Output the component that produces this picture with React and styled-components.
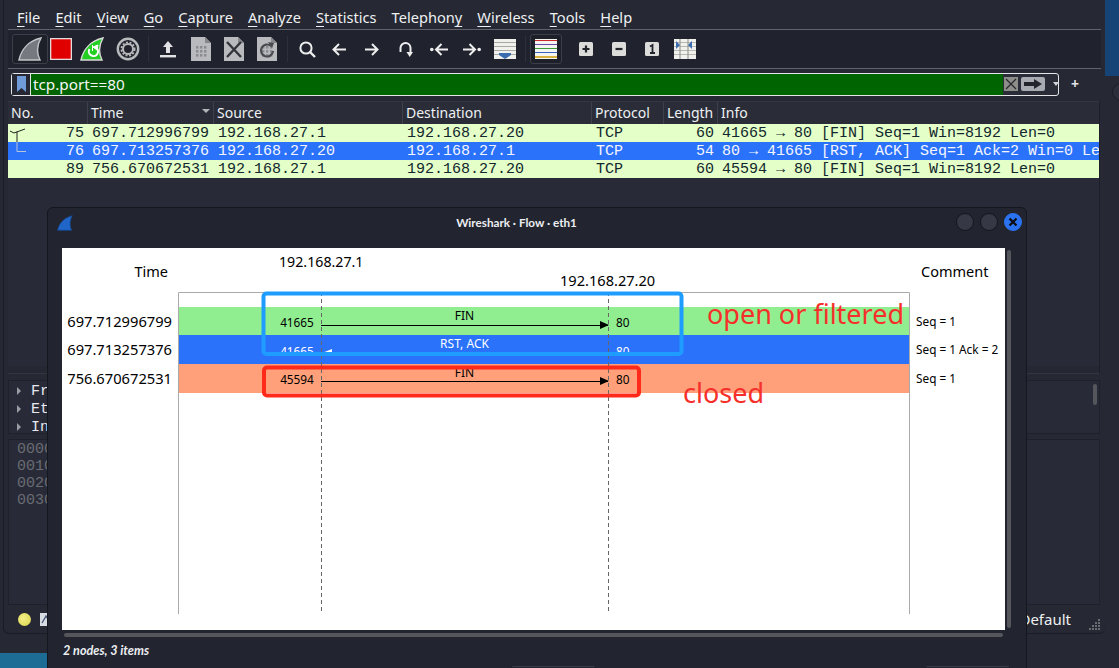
import React from 'react';
import styled, { createGlobalStyle } from 'styled-components';

const GlobalStyle = createGlobalStyle`
  html, body { margin: 0; padding: 0; background: #262833; }
  body { font-family: "Noto Sans", sans-serif; }
`;

const Desktop = styled.div`
  position: relative;
  display: flex;
  width: 1119px;
  height: 668px;
  overflow: hidden;
  background: #262833;
`;
const LeftColumn = styled.div`
  width: 1105px;
  flex: none;
`;
const RightColumn = styled.div`
  display: flex;
  flex-direction: column;
  flex: 1;
`;
const Wallpaper = styled.div`
  height: 76px;
  background: #174477;
`;
const DesktopDot = styled.div`
  width: 18px;
  height: 18px;
  margin: 7px 0 0 7px;
  box-sizing: border-box;
  border-radius: 50%;
  border: 1px solid #1b1d26;
  background: #2c2f3b;
`;
const BottomStripe = styled.div`
  width: 47px;
  height: 15px;
  margin-top: 19px;
  background: #1d6c96;
`;
const MainWindow = styled.div`
  display: flex;
  flex-direction: column;
  box-sizing: border-box;
  height: 634px;
  margin-left: 3px;
  padding: 0 4px 0 4px;
  background: #262933;
  border-left: 1px solid #1b1d26;
  border-bottom: 1px solid #1b1d26;
  border-radius: 0 0 6px 6px;
`;

const MenuBar = styled.div`
  display: flex;
  gap: 15.1px;
  height: 30px;
  flex: none;
  box-sizing: border-box;
  padding: 7px 0 0 9px;
  color: #eef0f2;
  font-size: 14.6px;
  line-height: 20px;
  border-bottom: 1px solid #62636a;
`;
const Mnemonic = styled.span`
  text-decoration: underline;
  text-underline-offset: 3px;
  text-decoration-thickness: 1px;
`;

const Toolbar = styled.div`
  display: flex;
  align-items: center;
  flex: none;
  height: 39px;
  box-sizing: border-box;
  padding-left: 4px;
  background: #20232d;
  border-bottom: 1px solid #62636a;
`;
const ToolButton = styled.div`
  display: flex;
  align-items: center;
  justify-content: center;
  box-sizing: border-box;
  flex: none;
  width: ${(p) => p.$w || 33}px;
  height: 30px;
  margin-right: ${(p) => p.$after || 0}px;
  border: 1px solid ${(p) => (p.$on ? '#3c3f49' : 'transparent')};
  border-radius: 3px;
  background: ${(p) => (p.$on ? '#1d2029' : 'transparent')};
`;
const ToolSep = styled.div`
  flex: none;
  width: 1px;
  height: 26px;
  margin: 0 ${(p) => p.$m || 4}px;
  background: #2d303a;
`;

const FilterRow = styled.div`
  display: flex;
  align-items: center;
  flex: none;
  height: 32px;
  padding-left: 3px;
  box-sizing: border-box;
  padding-bottom: 6px;
  padding-top: 4px;
`;
const FilterBox = styled.div`
  display: flex;
  align-items: stretch;
  width: 1048px;
  height: 23px;
  box-sizing: border-box;
  border: 1px solid #e6e6e8;
  border-radius: 3px;
  background: #2a2d38;
`;
const BookmarkCell = styled.div`
  display: flex;
  align-items: center;
  justify-content: center;
  width: 18px;
  flex: none;
  background: #262933;
  border-right: 1px solid #e6e6e8;
`;
const FilterInput = styled.div`
  width: 972px;
  flex: none;
  box-sizing: border-box;
  padding-left: 2px;
  background: #006400;
  color: #f4f6f4;
  font-size: 15.3px;
  line-height: 21px;
`;
const FilterActions = styled.div`
  display: flex;
  align-items: center;
  flex: 1;
  padding-left: 1px;
`;
const ClearButton = styled.div`
  display: flex;
  align-items: center;
  justify-content: center;
  width: 14px;
  height: 14px;
  background: #8d8e8a;
  margin-right: 3px;
`;
const ApplyButton = styled.div`
  display: flex;
  align-items: center;
  justify-content: center;
  width: 24px;
  height: 14px;
  border-radius: 2px;
  background: #a9abb3;
`;
const Caret = styled.div`
  width: 0;
  height: 0;
  margin-left: 8px;
  border-left: 3.5px solid transparent;
  border-right: 3.5px solid transparent;
  border-top: 4px solid #d4d5d8;
`;
const PlusSign = styled.div`
  margin-left: 12px;
  color: #e0e1e4;
  font-size: 14px;
  font-weight: 700;
  line-height: 20px;
`;

const columns = '80px 126px 189px 189px 72px 54px 1fr';

const ListPane = styled.div`
  display: flex;
  flex-direction: column;
  flex: none;
  width: 1092px;
  height: 273px;
  box-sizing: border-box;
  border-bottom: 1px solid #33363f;
  background: #282b37;
  border-right: 1px solid #1d1f28;
`;
const HeaderRow = styled.div`
  display: grid;
  grid-template-columns: ${columns};
  height: 23px;
  flex: none;
  box-sizing: border-box;
  background: #2a2d38;
  border-top: 1px solid #33363f;
`;
const HeaderCell = styled.div`
  position: relative;
  box-sizing: border-box;
  padding-left: 3px;
  color: #eef0f2;
  font-size: 14px;
  line-height: 22px;
  border-right: 1px solid #3f424d;
  &:last-child { border-right: 0; }
`;
const SortCaret = styled.span`
  position: absolute;
  right: 3px;
  top: 7px;
  width: 0;
  height: 0;
  border-left: 4px solid transparent;
  border-right: 4px solid transparent;
  border-top: 4px solid #b4b5b9;
`;
const PacketRow = styled.div`
  display: grid;
  grid-template-columns: ${columns};
  height: 18px;
  flex: none;
  overflow: hidden;
  background: ${(p) => (p.$selected ? '#2b72fb' : '#e4ffc7')};
  color: ${(p) => (p.$selected ? '#f4f6ff' : '#12272e')};
  font-family: "Liberation Mono", monospace;
  font-size: 15px;
  line-height: 20px;
`;
const Cell = styled.div`
  position: relative;
  box-sizing: border-box;
  padding: 0 4px;
  white-space: nowrap;
  overflow: hidden;
  text-align: ${(p) => (p.$right ? 'right' : 'left')};
`;
const Cue = styled.svg`
  position: absolute;
  left: 1px;
  top: 0;
`;
const ListFoot = styled.div`
  height: 7px;
  margin-top: auto;
  background: #252833;
`;

const DetailPane = styled.div`
  flex: none;
  width: 1092px;
  height: 54px;
  margin-top: 6px;
  box-sizing: border-box;
  padding: 1px 0 0 8px;
  background: #282b37;
  border: 1px solid #1f212a;
  position: relative;
`;
const TreeRow = styled.div`
  display: flex;
  align-items: center;
  height: 18px;
  color: #e6e8f0;
  font-family: "Liberation Mono", monospace;
  font-size: 15px;
`;
const TreeArrow = styled.span`
  width: 0;
  height: 0;
  margin-right: 10px;
  border-top: 4px solid transparent;
  border-bottom: 4px solid transparent;
  border-left: 4px solid #9a9ca3;
`;
const PaneScroll = styled.div`
  position: absolute;
  right: 2px;
  top: 3px;
  width: 4px;
  height: 21px;
  border-radius: 2px;
  background: #55565c;
`;
const BytesPane = styled.div`
  flex: none;
  width: 1092px;
  height: 166px;
  margin-top: 5px;
  box-sizing: border-box;
  padding: 1px 0 0 8px;
  background: #282b37;
  border: 1px solid #1f212a;
`;
const HexRow = styled.div`
  color: #6a6c74;
  font-family: "Liberation Mono", monospace;
  font-size: 15px;
  line-height: 17px;
`;
const StatusBar = styled.div`
  display: flex;
  align-items: center;
  flex: 1;
  width: 1092px;
  box-sizing: border-box;
  padding: 0 0 0 10px;
`;
const ExpertLed = styled.div`
  width: 13px;
  height: 13px;
  border-radius: 50%;
  background: radial-gradient(circle at 40% 40%, #f4f088, #d8d24a);
`;
const NoteIcon = styled.svg`
  margin-left: 9px;
`;
const ProfileLabel = styled.div`
  margin-left: auto;
  color: #eef0f2;
  font-size: 15px;
`;
const SizeGrip = styled.svg`
  margin: 10px 0 0 18px;
`;

/* flow dialog, a window floating over the main one */
const FlowWindow = styled.div`
  position: absolute;
  left: 47px;
  top: 207px;
  width: 980px;
  height: 470px;
  display: flex;
  flex-direction: column;
  box-sizing: border-box;
  background: #22252f;
  border: 1px solid #15171e;
  border-radius: 6px 6px 0 0;
`;
const TitleBar = styled.div`
  position: relative;
  display: flex;
  align-items: center;
  justify-content: center;
  height: 40px;
  flex: none;
  box-sizing: border-box;
  padding: 0 41px 13px 0;
  color: #eceef2;
  font-family: Lato, sans-serif;
  font-size: 11.7px;
  font-weight: 700;
`;
const TitleLogo = styled.svg`
  position: absolute;
  left: 9px;
  top: 7px;
`;
const WindowControls = styled.div`
  position: absolute;
  right: 4px;
  top: 5px;
  display: flex;
  gap: 6px;
`;
const WindowDot = styled.div`
  display: flex;
  align-items: center;
  justify-content: center;
  box-sizing: border-box;
  width: 18px;
  height: 18px;
  border-radius: 50%;
  background: ${(p) => (p.$close ? '#2b72f0' : '#363945')};
  border: 1px solid ${(p) => (p.$close ? '#2b72f0' : '#14161c')};
`;
const GraphArea = styled.div`
  display: flex;
  flex: none;
  height: 382px;
  padding-left: 14px;
`;
const GraphCanvas = styled.svg`
  display: block;
  flex: none;
  background: #fff;
  font-family: "Noto Sans", sans-serif;
`;
const VerticalScroll = styled.div`
  width: 4px;
  height: 378px;
  margin: 2px 0 0 2px;
  border-radius: 2px;
  background: #55565c;
`;
const HorizontalScroll = styled.div`
  width: 939px;
  height: 4px;
  margin: 3px 0 0 16px;
  border-radius: 2px;
  background: #55565c;
  flex: none;
`;
const DialogFooter = styled.div`
  display: flex;
  align-items: flex-start;
  padding: 7px 0 0 15px;
  color: #eceef2;
  font-family: Lato, sans-serif;
  font-size: 12.6px;
  font-style: italic;
  font-weight: 700;
  line-height: 14px;
`;
const FooterButton = styled.div`
  width: 85px;
  height: 20px;
  margin: 22px 0 0 ${(p) => p.$gap}px;
  box-sizing: border-box;
  border: 1px solid #15171e;
  border-top-color: #3b3e49;
  border-radius: 3px;
`;

const FinShape = 'M1 23 C3 13 10 4 23 1 C19 8 18.5 16 22 23 Z';

const Fin = () => (
  <svg width="24" height="24" viewBox="0 0 24 24">
    <path d={FinShape} fill="#777981" stroke="#c4c5c8" strokeWidth="1.4" />
  </svg>
);
const StopIcon = () => (
  <svg width="22" height="22" viewBox="0 0 22 22">
    <rect x="0.5" y="0.5" width="21" height="21" fill="#e00000" stroke="#e4dcdc" strokeWidth="1.6" />
  </svg>
);
const RestartIcon = () => (
  <svg width="24" height="24" viewBox="0 0 24 24">
    <path d={FinShape} fill="#22cf22" stroke="#d8dad8" strokeWidth="1.4" />
    <path d="M9.5 12 a4.6 4.6 0 1 0 7 -1" fill="none" stroke="#fff" strokeWidth="2" />
    <path d="M13 10 l5 -2 l-1 5 Z M12.5 8 v6" fill="#fff" stroke="#fff" strokeWidth="1" />
  </svg>
);
const GearIcon = () => (
  <svg width="24" height="24" viewBox="0 0 24 24">
    <circle cx="12" cy="12" r="10.2" fill="none" stroke="#b9babd" strokeWidth="2.4" />
    <circle cx="12" cy="12" r="5" fill="none" stroke="#b9babd" strokeWidth="2" />
    <circle cx="12" cy="12" r="6.6" fill="none" stroke="#b9babd" strokeWidth="1.8" strokeDasharray="2 1.6" />
  </svg>
);
const UploadIcon = () => (
  <svg width="16" height="17" viewBox="0 0 16 17">
    <path d="M8 0 L13 6 H10 V12 H6 V6 H3 Z" fill="#e3e3e5" />
    <rect x="0" y="14" width="16" height="2.4" fill="#e3e3e5" />
  </svg>
);
const DocBase = ({ children }) => (
  <svg width="20" height="24" viewBox="0 0 20 24">
    <path d="M0 0 H14 L20 6 V24 H0 Z" fill="#b8babd" />
    <path d="M14 0 L20 6 H14 Z" fill="#85878b" />
    {children}
  </svg>
);
const DocDigits = () => (
  <g fill="#8a8c90">
    {[9, 13, 17].map((y) => [5, 9, 13].map((x) => <rect key={`${x}${y}`} x={x} y={y} width="2.4" height="2.6" />))}
  </g>
);
const DocIcon = () => <DocBase><DocDigits /></DocBase>;
const DocCloseIcon = () => (
  <DocBase>
    <path d="M3 5 L17 20 M17 5 L3 20" stroke="#33353d" strokeWidth="2.4" />
  </DocBase>
);
const DocReloadIcon = () => (
  <DocBase>
    <DocDigits />
    <path d="M14 9 a6 6 0 1 0 2 5" fill="none" stroke="#484a50" strokeWidth="2.2" />
    <path d="M11 5 l6 1 l-2 5 Z" fill="#484a50" />
  </DocBase>
);
const SearchIcon = () => (
  <svg width="17" height="17" viewBox="0 0 17 17" fill="none" stroke="#eeeeef" strokeWidth="2">
    <circle cx="7" cy="7" r="5.6" />
    <path d="M11 11 L16 16" strokeWidth="2.4" />
  </svg>
);
const LeftIcon = () => (
  <svg width="14" height="13" viewBox="0 0 14 13" fill="none" stroke="#eeeeef" strokeWidth="2">
    <path d="M14 6.5 H2 M7 1 L1.5 6.5 L7 12" />
  </svg>
);
const RightIcon = () => (
  <svg width="14" height="13" viewBox="0 0 14 13" fill="none" stroke="#eeeeef" strokeWidth="2">
    <path d="M0 6.5 H12 M7 1 L12.5 6.5 L7 12" />
  </svg>
);
const JumpIcon = () => (
  <svg width="14" height="15" viewBox="0 0 14 15">
    <path d="M1.5 10 V6 a5 5 0 0 1 10 0 V11" fill="none" stroke="#eeeeef" strokeWidth="2" />
    <path d="M7.5 10 H14 L10.7 15 Z" fill="#eeeeef" />
  </svg>
);
const PrevIcon = () => (
  <svg width="18" height="13" viewBox="0 0 18 13" fill="none" stroke="#eeeeef" strokeWidth="2">
    <circle cx="1.8" cy="6.5" r="1.8" fill="#eeeeef" stroke="none" />
    <path d="M18 6.5 H7 M11.5 1 L6 6.5 L11.5 12" />
  </svg>
);
const NextIcon = () => (
  <svg width="18" height="13" viewBox="0 0 18 13" fill="none" stroke="#eeeeef" strokeWidth="2">
    <circle cx="16.2" cy="6.5" r="1.8" fill="#eeeeef" stroke="none" />
    <path d="M0 6.5 H11 M6.5 1 L12 6.5 L6.5 12" />
  </svg>
);
const AutoScrollIcon = () => (
  <svg width="22" height="20" viewBox="0 0 22 20">
    <rect width="22" height="20" fill="#f0f0ec" />
    <path d="M0 3.5 H22 M0 7.5 H22 M0 11.5 H22 M0 15.5 H22" stroke="#a8a9a4" strokeWidth="1" />
    <path d="M5 14 H17 V16 L11 20 L5 16 Z" fill="#3b6cb0" />
  </svg>
);
const ColorizeIcon = () => (
  <svg width="22" height="20" viewBox="0 0 22 20">
    <rect width="22" height="20" fill="#f4f4f0" />
    <path d="M0 1.5 H22" stroke="#cc2a2a" strokeWidth="1" />
    <path d="M0 5.5 H22" stroke="#6a4aa8" strokeWidth="1" />
    <path d="M0 9.5 H22" stroke="#3a9a3a" strokeWidth="1" />
    <path d="M0 13.5 H22" stroke="#3a62c0" strokeWidth="1" />
    <path d="M0 18 H22" stroke="#d0a010" strokeWidth="1.6" />
  </svg>
);
const ZoomBox = ({ children }) => (
  <svg width="14" height="14" viewBox="0 0 14 14">
    <rect width="14" height="14" rx="1.5" fill="#dcdcda" />
    {children}
  </svg>
);
const ResizeIcon = () => (
  <svg width="22" height="20" viewBox="0 0 22 20">
    <rect width="22" height="20" fill="#f0f0ec" />
    <path d="M0 3.5 H22 M0 7.5 H22 M0 11.5 H22 M0 15.5 H22" stroke="#b8b9b4" strokeWidth="1" />
    <path d="M6 0 V20 M14 0 V20" stroke="#8a8b88" strokeWidth="1" />
    <path d="M2 2 L6 6 L2 10 Z M18 2 L14 6 L18 10 Z" fill="#3b6cb0" />
  </svg>
);

const packets = [
  { no: 75, time: '697.712996799', src: '192.168.27.1', dst: '192.168.27.20', len: 60, info: '41665 → 80 [FIN] Seq=1 Win=8192 Len=0', cue: 'first' },
  { no: 76, time: '697.713257376', src: '192.168.27.20', dst: '192.168.27.1', len: 54, info: '80 → 41665 [RST, ACK] Seq=1 Ack=2 Win=0 Len=0', cue: 'last', selected: true },
  { no: 89, time: '756.670672531', src: '192.168.27.1', dst: '192.168.27.20', len: 60, info: '45594 → 80 [FIN] Seq=1 Win=8192 Len=0' },
];

const menus = [
  ['', 'F', 'ile'], ['', 'E', 'dit'], ['', 'V', 'iew'], ['', 'G', 'o'], ['', 'C', 'apture'], ['', 'A', 'nalyze'],
  ['', 'S', 'tatistics'], ['Telephon', 'y', ''], ['', 'W', 'ireless'], ['', 'T', 'ools'], ['', 'H', 'elp'],
];

const flows = [
  { y: 307, h: 28, fill: '#90ee90', time: '697.712996799', from: '41665', to: '80', label: 'FIN', labelY: 320, comment: 'Seq = 1', line: 325, ink: '#000', base: 327 },
  { y: 335, h: 29, fill: '#2b72fb', time: '697.713257376', from: '41665', to: '80', label: 'RST, ACK', labelY: 348, comment: 'Seq = 1 Ack = 2', line: 353, ink: '#fff', base: 356, back: true },
  { y: 364, h: 29, fill: '#ffa07a', time: '756.670672531', from: '45594', to: '80', label: 'FIN', labelY: 377, comment: 'Seq = 1', line: 381, ink: '#000', base: 384 },
];

const FlowGraph = () => (
  <GraphCanvas width="943" height="382" viewBox="62 248 943 382">
    <text x="168" y="277" fontSize="14.5" textAnchor="end">Time</text>
    <text x="279" y="267" fontSize="14.2">192.168.27.1</text>
    <text x="560" y="286" fontSize="14.6">192.168.27.20</text>
    <text x="921" y="277" fontSize="14.5">Comment</text>
    <path d="M178.5 614 V292.5 H909.5 V614" fill="none" stroke="#aaa" />
    {flows.map((f) => <rect key={f.y} x="179" y={f.y} width="730" height={f.h} fill={f.fill} />)}
    <path d="M321.5 292 V614 M608.5 292 V614" stroke="#666" strokeDasharray="4 3" />
    {flows.map((f) => (
      <g key={f.y}>
        <text x="172" y={f.y + 20} fontSize="14.7" textAnchor="end">{f.time}</text>
        <text x="297" y={f.base} fontSize="11.8" textAnchor="middle" fill={f.ink}>{f.from}</text>
        <text x="616" y={f.base} fontSize="11.8" fill={f.ink}>{f.to}</text>
        <text x="464.5" y={f.labelY} fontSize="12" textAnchor="middle" fill={f.ink}>{f.label}</text>
        <path d={`M321 ${f.line}.5 H608`} stroke={f.ink} />
        {f.back
          ? <path d={`M322 ${f.line} L332 ${f.line - 4} V${f.line} Z`} fill={f.ink} />
          : <path d={`M600 ${f.line - 4} L609 ${f.line} L600 ${f.line + 4} Z`} fill={f.ink} />}
        <text x="916" y={f.y + 19} fontSize="11.8">{f.comment}</text>
      </g>
    ))}
    <rect x="263.5" y="293.5" width="418" height="60.5" rx="3" fill="none" stroke="#1e9cff" strokeWidth="4" />
    <rect x="264" y="367.5" width="375" height="28" rx="3" fill="none" stroke="#ff2a1a" strokeWidth="4" />
    <text x="707" y="324" fontSize="27" fill="#f5302a">open or filtered</text>
    <text x="683" y="403" fontSize="27" fill="#f5302a">closed</text>
  </GraphCanvas>
);

export default function App() {
  return (
    <Desktop>
      <GlobalStyle />
      <LeftColumn>
        <MainWindow>
          <MenuBar>
            {menus.map(([head, key, tail]) => (
              <span key={head + key + tail}>{head}<Mnemonic>{key}</Mnemonic>{tail}</span>
            ))}
          </MenuBar>
          <Toolbar>
            <ToolButton $w={36} $on><Fin /></ToolButton>
            <ToolButton $w={26}><StopIcon /></ToolButton>
            <ToolButton $w={36}><RestartIcon /></ToolButton>
            <ToolButton $w={35}><GearIcon /></ToolButton>
            <ToolSep $m={3} />
            <ToolButton $w={32}><UploadIcon /></ToolButton>
            <ToolButton><DocIcon /></ToolButton>
            <ToolButton><DocCloseIcon /></ToolButton>
            <ToolButton><DocReloadIcon /></ToolButton>
            <ToolSep $m={4} />
            <ToolButton $w={30}><SearchIcon /></ToolButton>
            <ToolButton $w={34}><LeftIcon /></ToolButton>
            <ToolButton $w={32}><RightIcon /></ToolButton>
            <ToolButton $w={35}><JumpIcon /></ToolButton>
            <ToolButton $w={32}><PrevIcon /></ToolButton>
            <ToolButton><NextIcon /></ToolButton>
            <ToolButton><AutoScrollIcon /></ToolButton>
            <ToolSep $m={4} />
            <ToolButton $w={32} $on $after={7}><ColorizeIcon /></ToolButton>
            <ToolButton $w={33}><ZoomBox><path d="M3.5 7 H10.5 M7 3.5 V10.5" stroke="#22242c" strokeWidth="2.2" /></ZoomBox></ToolButton>
            <ToolButton><ZoomBox><path d="M3.5 7 H10.5" stroke="#22242c" strokeWidth="2.2" /></ZoomBox></ToolButton>
            <ToolButton><ZoomBox><path d="M5 4.5 L7.5 3 V11 M5 11 H10" fill="none" stroke="#22242c" strokeWidth="1.8" /></ZoomBox></ToolButton>
            <ToolButton><ResizeIcon /></ToolButton>
          </Toolbar>
          <FilterRow>
            <FilterBox>
              <BookmarkCell>
                <svg width="9" height="16" viewBox="0 0 9 16"><path d="M0 0 H9 V16 L4.5 12 L0 16 Z" fill="#6f9bd8" /></svg>
              </BookmarkCell>
              <FilterInput>tcp.port==80</FilterInput>
              <FilterActions>
                <ClearButton>
                  <svg width="12" height="12" viewBox="0 0 12 12"><path d="M1 1 L11 11 M11 1 L1 11" stroke="#26282e" strokeWidth="1.2" /></svg>
                </ClearButton>
                <ApplyButton>
                  <svg width="18" height="10" viewBox="0 0 18 10"><path d="M0 3 H10 V0 L18 5 L10 10 V7 H0 Z" fill="#23252d" /></svg>
                </ApplyButton>
                <Caret />
              </FilterActions>
            </FilterBox>
            <PlusSign>+</PlusSign>
          </FilterRow>
          <ListPane>
            <HeaderRow>
              <HeaderCell>No.</HeaderCell>
              <HeaderCell>Time<SortCaret /></HeaderCell>
              <HeaderCell>Source</HeaderCell>
              <HeaderCell>Destination</HeaderCell>
              <HeaderCell>Protocol</HeaderCell>
              <HeaderCell>Length</HeaderCell>
              <HeaderCell>Info</HeaderCell>
            </HeaderRow>
            {packets.map((p) => (
              <PacketRow key={p.no} $selected={p.selected}>
                <Cell $right>
                  {p.cue === 'first' && (
                    <Cue width="18" height="18" viewBox="0 0 18 18" fill="none" stroke="#222">
                      <path d="M1 7 L5 9 L16 5 M8 7.5 V18" />
                    </Cue>
                  )}
                  {p.cue === 'last' && (
                    <Cue width="18" height="18" viewBox="0 0 18 18" fill="none" stroke="#b8c4d8">
                      <path d="M8 0 V9.5 H17" />
                    </Cue>
                  )}
                  {p.no}
                </Cell>
                <Cell>{p.time}</Cell>
                <Cell>{p.src}</Cell>
                <Cell>{p.dst}</Cell>
                <Cell>TCP</Cell>
                <Cell $right>{p.len}</Cell>
                <Cell>{p.info}</Cell>
              </PacketRow>
            ))}
            <ListFoot />
          </ListPane>
          <DetailPane>
            <TreeRow><TreeArrow />Frame</TreeRow>
            <TreeRow><TreeArrow />Ethernet</TreeRow>
            <TreeRow><TreeArrow />Internet</TreeRow>
            <PaneScroll />
          </DetailPane>
          <BytesPane>
            <HexRow>0000</HexRow>
            <HexRow>0010</HexRow>
            <HexRow>0020</HexRow>
            <HexRow>0030</HexRow>
          </BytesPane>
          <StatusBar>
            <ExpertLed />
            <NoteIcon width="12" height="13" viewBox="0 0 12 13">
              <rect width="12" height="13" fill="#d8dde4" />
              <path d="M2 10 L6 3 L8 6" fill="none" stroke="#4a5a78" strokeWidth="1.4" />
            </NoteIcon>
            <ProfileLabel>Profile: Default</ProfileLabel>
            <SizeGrip width="11" height="11" viewBox="0 0 11 11" fill="#6a6c72">
              <rect x="9" y="0" width="2" height="2" />
              <rect x="6" y="3" width="2" height="2" /><rect x="9" y="3" width="2" height="2" />
              <rect x="3" y="6" width="2" height="2" /><rect x="6" y="6" width="2" height="2" /><rect x="9" y="6" width="2" height="2" />
              <rect x="0" y="9" width="2" height="2" /><rect x="3" y="9" width="2" height="2" /><rect x="6" y="9" width="2" height="2" /><rect x="9" y="9" width="2" height="2" />
            </SizeGrip>
          </StatusBar>
        </MainWindow>
        <BottomStripe />
      </LeftColumn>
      <RightColumn>
        <Wallpaper />
        <DesktopDot />
      </RightColumn>
      <FlowWindow>
        <TitleBar>
          <TitleLogo width="16" height="16" viewBox="0 0 24 24">
            <path d={FinShape} fill="#1f66c8" stroke="#164a96" strokeWidth="1" />
          </TitleLogo>
          Wireshark · Flow · eth1
          <WindowControls>
            <WindowDot />
            <WindowDot />
            <WindowDot $close>
              <svg width="10" height="10" viewBox="0 0 10 10"><path d="M1.5 1.5 L8.5 8.5 M8.5 1.5 L1.5 8.5" stroke="#0b0d12" strokeWidth="2.2" /></svg>
            </WindowDot>
          </WindowControls>
        </TitleBar>
        <GraphArea>
          <FlowGraph />
          <VerticalScroll />
        </GraphArea>
        <HorizontalScroll />
        <DialogFooter>
          2 nodes, 3 items
          <FooterButton $gap={362} />
          <FooterButton $gap={329} />
        </DialogFooter>
      </FlowWindow>
    </Desktop>
  );
}
